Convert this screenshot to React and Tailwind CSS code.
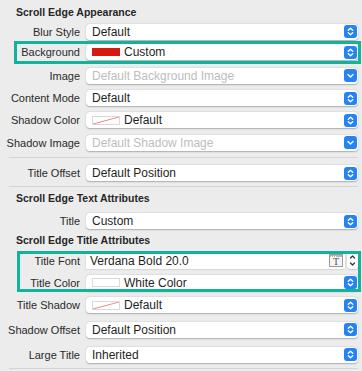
import React from "react";

const Arrows = ({ single }) => (
  <div className="ml-auto mr-[1.5px] w-[13px] h-[13px] rounded-[3px] bg-[#2583f6] flex items-center justify-center shrink-0">
    <svg width="13" height="13" viewBox="0 0 13 13" fill="none" stroke="white" strokeWidth="1.4" strokeLinecap="round" strokeLinejoin="round">
      {single ? (
        <path d="M4 5.5 L6.5 8 L9 5.5" />
      ) : (
        <>
          <path d="M4.3 5.2 L6.5 3.2 L8.7 5.2" />
          <path d="M4.3 7.8 L6.5 9.8 L8.7 7.8" />
        </>
      )}
    </svg>
  </div>
);

const Well = ({ kind }) => {
  if (kind === "red")
    return <div className="w-[28px] h-[8px] bg-[#d41b0f] shrink-0 mr-[4px]" />;
  if (kind === "white")
    return <div className="w-[28px] h-[9px] bg-white border border-[#d9d9d9] shrink-0 mr-[4px]" />;
  return (
    <div className="w-[28px] h-[9px] bg-white border border-[#d9d9d9] shrink-0 mr-[4px] relative">
      <svg className="absolute inset-0" width="26" height="7" viewBox="0 0 26 7">
        <line x1="0" y1="7" x2="26" y2="0" stroke="#f08a85" strokeWidth="1" />
      </svg>
    </div>
  );
};

const Popup = ({ text, placeholder, well, single }) => (
  <div className="ml-[6px] w-[272px] h-[16px] bg-white rounded-[4px] shadow-[0_0.5px_1.5px_rgba(0,0,0,0.28)] flex items-center pl-[6px]">
    {well && <Well kind={well} />}
    <span className={`text-[12px] leading-[16px] whitespace-nowrap ${placeholder ? "text-[#bdbdbd]" : "text-[#1f1f1f]"}`}>{text}</span>
    <Arrows single={single} />
  </div>
);

const Label = ({ children }) => (
  <div className="w-[80px] shrink-0 text-right text-[11px] leading-[14px] text-[#2a2a2a] whitespace-nowrap">{children}</div>
);

const Row = ({ label, h, mt, children }) => (
  <div className={`relative flex items-center ${h} ${mt || ""}`}>
    <Label>{label}</Label>
    {children}
  </div>
);

const Header = ({ children, h, pt }) => (
  <div className={`flex items-center pl-[16px] ${h} ${pt || ""} text-[10.5px] font-bold text-[#262626] whitespace-nowrap`}>{children}</div>
);

const Sep = ({ mt }) => <div className={`ml-[9px] w-[349px] h-px bg-[#d5d5d5] ${mt}`} />;

export default function App() {
  return (
    <div className="w-[362px] h-[371px] bg-[#ececec] overflow-hidden font-['Liberation_Sans',Arial,sans-serif]">
      <Header h="h-[21px]" pt="pt-[5px]">Scroll Edge Appearance</Header>
      <Row label="Blur Style" h="h-[21px]">
        <Popup text="Default" />
      </Row>
      <Row label="Background" h="h-[20px]">
        <div className="absolute left-[14px] top-[-1px] w-[347px] h-[23px] border-[3px] border-[#12b39b] pointer-events-none" />
        <Popup text="Custom" well="red" />
      </Row>
      <Row label="Image" h="h-[23px]" mt="mt-[2px]">
        <Popup text="Default Background Image" placeholder single />
      </Row>
      <Row label="Content Mode" h="h-[22px]">
        <Popup text="Default" />
      </Row>
      <Row label="Shadow Color" h="h-[22px]">
        <Popup text="Default" well="none" />
      </Row>
      <Row label="Shadow Image" h="h-[23px]">
        <Popup text="Default Shadow Image" placeholder single />
      </Row>
      <Sep mt="mt-[3px]" />
      <Row label="Title Offset" h="h-[22px]" mt="mt-[4px]">
        <Popup text="Default Position" />
      </Row>
      <Sep mt="mt-[2px]" />
      <Header h="h-[24px]">Scroll Edge Text Attributes</Header>
      <Row label="Title" h="h-[20px]">
        <Popup text="Custom" />
      </Row>
      <Header h="h-[19px]">Scroll Edge Title Attributes</Header>
      <div className="relative">
        <div className="absolute left-[17px] top-[1px] w-[344px] h-[41px] border-[3px] border-[#12b39b] pointer-events-none z-10" />
        <Row label="Title Font" h="h-[21px]">
          <div className="ml-[6px] w-[259px] h-[16px] bg-white shadow-[0_0.5px_1.5px_rgba(0,0,0,0.22)] flex items-center pl-[4px]">
            <span className="text-[12px] leading-[16px] text-[#1f1f1f] whitespace-nowrap">Verdana Bold 20.0</span>
            <div className="ml-auto mr-[2px] w-[14px] h-[13px] border border-[#9a9a9a] bg-[#f4f4f4] flex flex-col">
              <div className="h-[3px] bg-[#b5b5b5] flex items-center gap-[1px] pl-[1px]">
                <span className="w-[1px] h-[1px] bg-white" />
                <span className="w-[1px] h-[1px] bg-white" />
                <span className="w-[1px] h-[1px] bg-white" />
              </div>
              <div className="flex-1 flex items-center justify-center text-[10px] leading-[9px] text-[#555] font-['Liberation_Serif',serif]">T</div>
            </div>
          </div>
          <div className="ml-[2px] w-[11px] h-[17px] bg-white rounded-[3px] shadow-[0_0.5px_1.5px_rgba(0,0,0,0.25)] flex items-center justify-center">
            <svg width="11" height="17" viewBox="0 0 11 17" fill="none" stroke="#333" strokeWidth="1.2" strokeLinecap="round" strokeLinejoin="round">
              <path d="M3.5 6 L5.5 4 L7.5 6" />
              <path d="M3.5 11 L5.5 13 L7.5 11" />
            </svg>
          </div>
        </Row>
        <Row label="Title Color" h="h-[23px]">
          <Popup text="White Color" well="white" />
        </Row>
      </div>
      <Row label="Title Shadow" h="h-[22px]">
        <Popup text="Default" well="none" />
      </Row>
      <Row label="Shadow Offset" h="h-[23px]" mt="mt-[2px]">
        <Popup text="Default Position" />
      </Row>
      <Row label="Large Title" h="h-[23px]" mt="mt-[2px]">
        <Popup text="Inherited" />
      </Row>
      <Sep mt="mt-[2px]" />
    </div>
  );
}
